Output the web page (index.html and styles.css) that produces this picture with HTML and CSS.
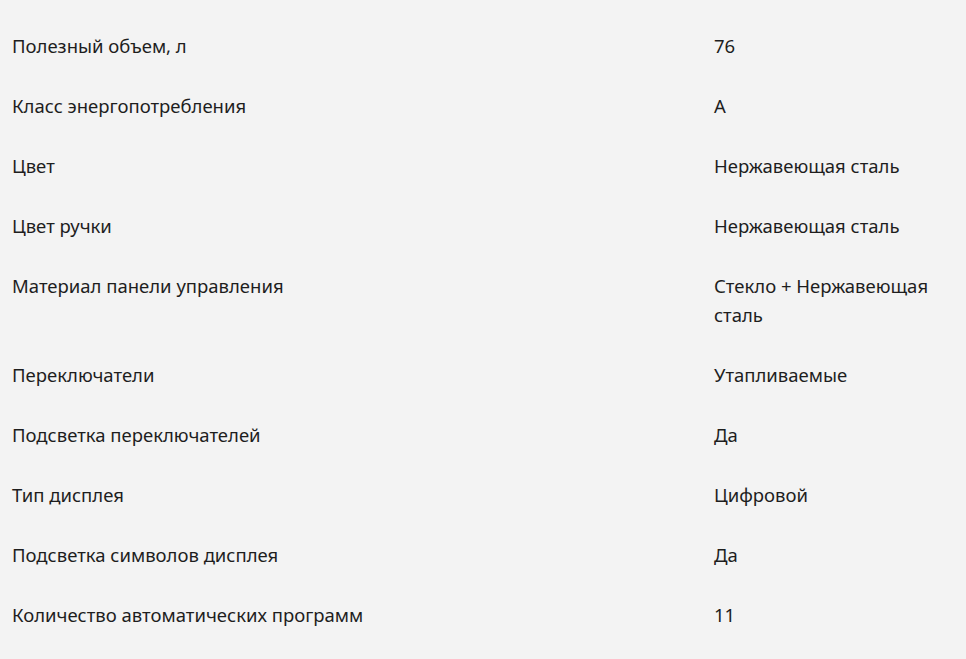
FILE: index.html
```html
<!DOCTYPE html>
<html lang="ru">
<head>
<meta charset="utf-8">
<title>Характеристики</title>
<link rel="stylesheet" href="styles.css">
</head>
<body>
<div class="specs">
  <div class="row"><div class="name">Полезный объем, л</div><div class="value">76</div></div>
  <div class="row"><div class="name">Класс энергопотребления</div><div class="value">A</div></div>
  <div class="row"><div class="name">Цвет</div><div class="value">Нержавеющая сталь</div></div>
  <div class="row"><div class="name">Цвет ручки</div><div class="value">Нержавеющая сталь</div></div>
  <div class="row"><div class="name">Материал панели управления</div><div class="value">Стекло + Нержавеющая сталь</div></div>
  <div class="row"><div class="name">Переключатели</div><div class="value">Утапливаемые</div></div>
  <div class="row"><div class="name">Подсветка переключателей</div><div class="value">Да</div></div>
  <div class="row"><div class="name">Тип дисплея</div><div class="value">Цифровой</div></div>
  <div class="row"><div class="name">Подсветка символов дисплея</div><div class="value">Да</div></div>
  <div class="row"><div class="name">Количество автоматических программ</div><div class="value">11</div></div>
</div>
</body>
</html>
```
FILE: styles.css
```css
html, body {
  margin: 0;
  padding: 0;
  background: #f3f3f3;
}
body {
  font-family: "Noto Sans", "DejaVu Sans", sans-serif;
  font-size: 18.5px;
  color: #1e1e1e;
}
.specs {
  padding: 15px 0 0 12px;
}
.row {
  display: grid;
  grid-template-columns: 702px 240px;
  padding: 15.5px 0;
  line-height: 29px;
}
```
